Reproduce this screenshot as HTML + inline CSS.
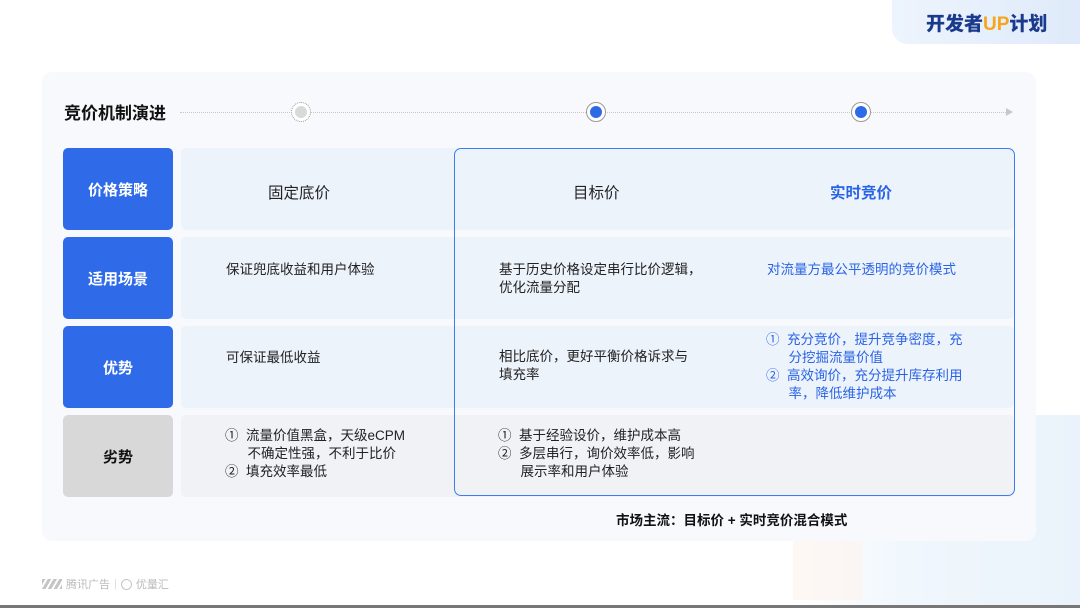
<!DOCTYPE html><html><head><meta charset="utf-8"><style>
*{margin:0;padding:0;box-sizing:border-box}
body{width:1080px;height:608px;overflow:hidden;background:#fff;font-family:"Liberation Sans","Noto Sans CJK SC",sans-serif;position:relative;color:#222}
.a{position:absolute}
.badge{left:892px;top:0;width:188px;height:44px;background:linear-gradient(90deg,#edf4fd,#dfeafa);border-bottom-left-radius:16px;font-size:19px;font-weight:900;color:#1a3a8c;padding:9px 0 0 34px;letter-spacing:0}
.badge span{color:#f7a51c}
.card{left:42px;top:72px;width:994px;height:469px;background:#f7f9fd;border-radius:10px}
.title{left:64px;top:99px;font-size:17px;font-weight:700;color:#111}
.line{left:180px;top:112px;width:828px;border-top:1.5px dotted #c8c8c8}
.arrow{left:1006px;top:108px;width:0;height:0;border-left:7px solid #c8c8c8;border-top:4px solid transparent;border-bottom:4px solid transparent}
.dot{width:20px;height:20px;border-radius:50%;border:1.5px solid #999;background:#fff}
.dot i{position:absolute;left:2.5px;top:2.5px;width:12px;height:12px;border-radius:50%;background:#2e6ae8}
.lab{left:63px;width:110px;height:82px;border-radius:5px;background:#2f6ae8;color:#fff;font-size:15px;font-weight:700;display:flex;align-items:center;justify-content:center}
.cell{left:181px;width:833px;height:82px;border-radius:5px;background:#edf3fb}
.t{font-size:13.5px;line-height:18px;color:#222}
.b{color:#2a64e6}
.box{left:454px;top:148px;width:561px;height:348px;border:1.5px solid #3b7cf0;border-radius:7px}
</style></head><body>
<div class="a" style="left:790px;top:415px;width:290px;height:193px;background:linear-gradient(90deg,rgba(255,255,255,0),#f0f7fd 40%,#eaf3fb)"></div>
<div class="a" style="left:793px;top:440px;width:70px;height:160px;background:#fdf4ec;opacity:.6"></div>
<div class="a badge">开发者<span>UP</span>计划</div>
<div class="a card"></div>
<div class="a title">竞价机制演进</div>
<div class="a line"></div><div class="a arrow"></div>
<div class="a dot" style="left:291px;top:102px;border-style:dotted;background:#fff"><i style="background:#d9d9d9"></i></div>
<div class="a dot" style="left:586px;top:102px"><i></i></div>
<div class="a dot" style="left:851px;top:102px"><i></i></div>

<div class="a lab" style="top:148px">价格策略</div>
<div class="a lab" style="top:237px">适用场景</div>
<div class="a lab" style="top:326px">优势</div>
<div class="a lab" style="top:415px;background:#d8d8d8;color:#111">劣势</div>
<div class="a cell" style="top:148px"></div>
<div class="a cell" style="top:237px"></div>
<div class="a cell" style="top:326px"></div>
<div class="a cell" style="top:415px;background:#f0f2f5"></div>
<div class="a box"></div>

<div class="a" style="left:268px;top:181px;font-size:15.5px">固定底价</div>
<div class="a" style="left:573px;top:181px;font-size:15.5px">目标价</div>
<div class="a b" style="left:830px;top:181px;font-size:15.5px;font-weight:700">实时竞价</div>

<div class="a t" style="left:226px;top:261px">保证兜底收益和用户体验</div>
<div class="a t" style="left:499px;top:261px">基于历史价格设定串行比价逻辑，<br>优化流量分配</div>
<div class="a t b" style="left:767px;top:261px">对流量方最公平透明的竞价模式</div>

<div class="a t" style="left:226px;top:349px">可保证最低收益</div>
<div class="a t" style="left:499px;top:348px">相比底价，更好平衡价格诉求与<br>填充率</div>
<div class="a t b" style="left:766px;top:331px">①&nbsp; 充分竞价，提升竞争密度，充<br>&nbsp;&nbsp;&nbsp;&nbsp;&nbsp; 分挖掘流量价值<br>②&nbsp; 高效询价，充分提升库存利用<br>&nbsp;&nbsp;&nbsp;&nbsp;&nbsp; 率，降低维护成本</div>

<div class="a t" style="left:225px;top:427px">①&nbsp; 流量价值黑盒，天级eCPM<br>&nbsp;&nbsp;&nbsp;&nbsp;&nbsp; 不确定性强，不利于比价<br>②&nbsp; 填充效率最低</div>
<div class="a t" style="left:498px;top:427px">①&nbsp; 基于经验设价，维护成本高<br>②&nbsp; 多层串行，询价效率低，影响<br>&nbsp;&nbsp;&nbsp;&nbsp;&nbsp; 展示率和用户体验</div>

<div class="a" style="left:616px;top:509px;font-size:13.5px;font-weight:700;color:#111">市场主流：目标价 + 实时竞价混合模式</div>

<div class="a" style="left:42px;top:576px;font-size:11px;color:#bbb;display:flex;align-items:center;gap:4px"><span style="display:inline-block;width:20px;height:10px;background:repeating-linear-gradient(120deg,#c4c4c4 0 3px,transparent 3px 5px)"></span>腾讯广告 <span style="color:#ddd">|</span> <span style="display:inline-block;width:11px;height:11px;border:1.5px solid #c4c4c4;border-radius:50%"></span>优量汇</div>
<div class="a" style="left:0;top:605px;width:1080px;height:3px;background:#777"></div>
</body></html>
